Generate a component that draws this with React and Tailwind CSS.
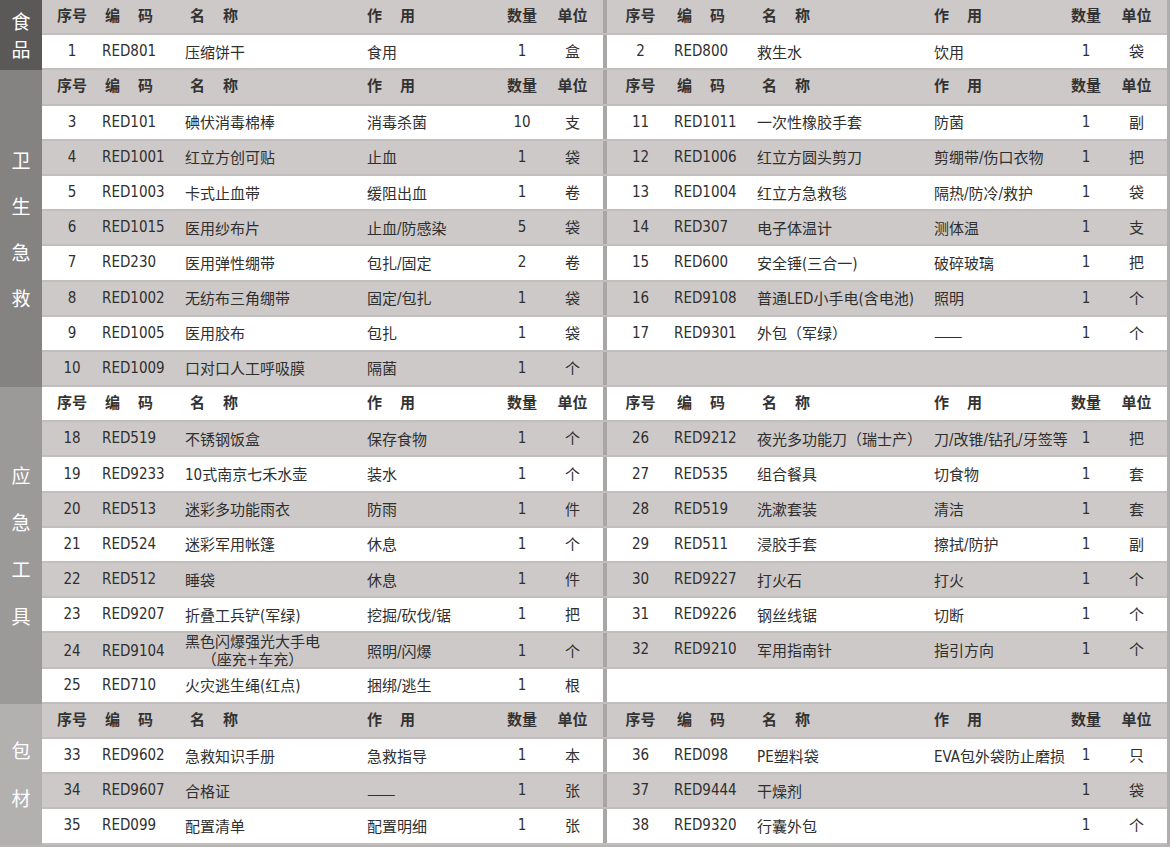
const LEFT_COLS = "grid-cols-[60px_83px_182px_135px_40px_61px]";
const RIGHT_COLS = "grid-cols-[67px_83px_177px_132px_40px_1fr]";
const CJK = { fontFamily: '"Noto Sans CJK SC", sans-serif' };

const sections = [
  {
    title: ["食", "品"],
    tone: "bg-[#5b5858]",
    gap: "gap-0",
    lead: "leading-[28px]",
    headerWhite: false,
    rows: [[[1, "RED801", "压缩饼干", "食用", 1, "盒"], [2, "RED800", "救生水", "饮用", 1, "袋"]]],
  },
  {
    title: ["卫", "生", "急", "救"],
    tone: "bg-[#858282]",
    gap: "gap-[18px]",
    lead: "leading-[28px]",
    headerWhite: false,
    rows: [
      [[3, "RED101", "碘伏消毒棉棒", "消毒杀菌", 10, "支"], [11, "RED1011", "一次性橡胶手套", "防菌", 1, "副"]],
      [[4, "RED1001", "红立方创可贴", "止血", 1, "袋"], [12, "RED1006", "红立方圆头剪刀", "剪绷带/伤口衣物", 1, "把"]],
      [[5, "RED1003", "卡式止血带", "缓阻出血", 1, "卷"], [13, "RED1004", "红立方急救毯", "隔热/防冷/救护", 1, "袋"]],
      [[6, "RED1015", "医用纱布片", "止血/防感染", 5, "袋"], [14, "RED307", "电子体温计", "测体温", 1, "支"]],
      [[7, "RED230", "医用弹性绷带", "包扎/固定", 2, "卷"], [15, "RED600", "安全锤(三合一)", "破碎玻璃", 1, "把"]],
      [[8, "RED1002", "无纺布三角绷带", "固定/包扎", 1, "袋"], [16, "RED9108", "普通LED小手电(含电池)", "照明", 1, "个"]],
      [[9, "RED1005", "医用胶布", "包扎", 1, "袋"], [17, "RED9301", "外包（军绿）", "——", 1, "个"]],
      [[10, "RED1009", "口对口人工呼吸膜", "隔菌", 1, "个"], null],
    ],
  },
  {
    title: ["应", "急", "工", "具"],
    tone: "bg-[#9c9999]",
    gap: "gap-[19px]",
    lead: "leading-[28px]",
    headerWhite: true,
    rows: [
      [[18, "RED519", "不锈钢饭盒", "保存食物", 1, "个"], [26, "RED9212", "夜光多功能刀（瑞士产）", "刀/改锥/钻孔/牙签等", 1, "把"]],
      [[19, "RED9233", "10式南京七禾水壶", "装水", 1, "个"], [27, "RED535", "组合餐具", "切食物", 1, "套"]],
      [[20, "RED513", "迷彩多功能雨衣", "防雨", 1, "件"], [28, "RED519", "洗漱套装", "清洁", 1, "套"]],
      [[21, "RED524", "迷彩军用帐篷", "休息", 1, "个"], [29, "RED511", "浸胶手套", "擦拭/防护", 1, "副"]],
      [[22, "RED512", "睡袋", "休息", 1, "件"], [30, "RED9227", "打火石", "打火", 1, "个"]],
      [[23, "RED9207", "折叠工兵铲(军绿)", "挖掘/砍伐/锯", 1, "把"], [31, "RED9226", "钢丝线锯", "切断", 1, "个"]],
      [[24, "RED9104", ["黑色闪爆强光大手电", "（座充+车充）"], "照明/闪爆", 1, "个"], [32, "RED9210", "军用指南针", "指引方向", 1, "个"]],
      [[25, "RED710", "火灾逃生绳(红点)", "捆绑/逃生", 1, "根"], null],
    ],
  },
  {
    title: ["包", "材"],
    tone: "bg-[#b3b0b0]",
    gap: "gap-[20px]",
    lead: "leading-[28px]",
    headerWhite: false,
    rows: [
      [[33, "RED9602", "急救知识手册", "急救指导", 1, "本"], [36, "RED098", "PE塑料袋", "EVA包外袋防止磨损", 1, "只"]],
      [[34, "RED9607", "合格证", "——", 1, "张"], [37, "RED9444", "干燥剂", "", 1, "袋"]],
      [[35, "RED099", "配置清单", "配置明细", 1, "张"], [38, "RED9320", "行囊外包", "", 1, "个"]],
    ],
  },
];

const HeaderCells = ({ cols }) => (
  <div className={`grid ${cols} h-full items-center font-bold text-[#333]`}>
    <span className="text-center">序号</span>
    <span className="pl-[3px]">编<span className="ml-[18px]">码</span></span>
    <span className="pl-[5px]">名<span className="ml-[18px]">称</span></span>
    <span>作<span className="ml-[18px]">用</span></span>
    <span className="text-center whitespace-nowrap">数量</span>
    <span className="text-center">单位</span>
  </div>
);

const ItemCells = ({ cols, item }) => {
  if (!item) return <div className="h-full" />;
  const [no, code, name, use, qty, unit] = item;
  return (
    <div className={`grid ${cols} h-full items-center text-[#2f2f2f]`}>
      <span className="text-center">{no}</span>
      <span>{code}</span>
      {Array.isArray(name) ? (
        <span className="flex flex-col items-center w-fit leading-[18px]">
          <span>{name[0]}</span>
          <span>{name[1]}</span>
        </span>
      ) : (
        <span className="whitespace-nowrap pt-[3px]">{name}</span>
      )}
      {use === "——" ? (
        <span className="pt-[3px] text-[17px]" style={CJK}>{use}</span>
      ) : (
        <span className="whitespace-nowrap pt-[3px]">{use}</span>
      )}
      <span className="text-center">{qty}</span>
      <span className="text-center pt-[2px]">{unit}</span>
    </div>
  );
};

const Row = ({ white, children }) => (
  <div className={`flex h-[35.2px] border-b-2 border-[#c2bebd] ${white ? "bg-white" : "bg-[#cdc9c8]"}`}>
    {children}
  </div>
);

const Halves = ({ left, right }) => (
  <>
    <div className="w-[561px] shrink-0">{left}</div>
    <div className="w-[4px] shrink-0 bg-[#a9a6a6]" />
    <div className="flex-1">{right}</div>
  </>
);

export default function App() {
  return (
    <div
      className="w-[1170px] h-[847px] overflow-hidden bg-[#b7b4b3] text-[15px] leading-none"
      style={{ fontFamily: '"Liberation Sans Narrow", "DejaVu Sans Condensed", "Noto Sans CJK SC", sans-serif' }}
    >
      <div className="flex flex-col border-r-[3px] border-[#b0adad]">
        {sections.map((sec, si) => (
          <div key={si} className="flex">
            <div
              className={`w-[42px] shrink-0 ${sec.tone} flex flex-col items-center justify-center ${sec.gap} text-white text-[19px] ${sec.lead}`}
              style={CJK}
            >
              {sec.title.map((c) => (
                <span key={c}>{c}</span>
              ))}
            </div>
            <div className="flex-1 flex flex-col">
              <Row white={sec.headerWhite}>
                <Halves left={<HeaderCells cols={LEFT_COLS} />} right={<HeaderCells cols={RIGHT_COLS} />} />
              </Row>
              {sec.rows.map((r, ri) => (
                <Row key={ri} white={sec.headerWhite ? ri % 2 === 1 : ri % 2 === 0}>
                  <Halves left={<ItemCells cols={LEFT_COLS} item={r[0]} />} right={<ItemCells cols={RIGHT_COLS} item={r[1]} />} />
                </Row>
              ))}
            </div>
          </div>
        ))}
      </div>
    </div>
  );
}
